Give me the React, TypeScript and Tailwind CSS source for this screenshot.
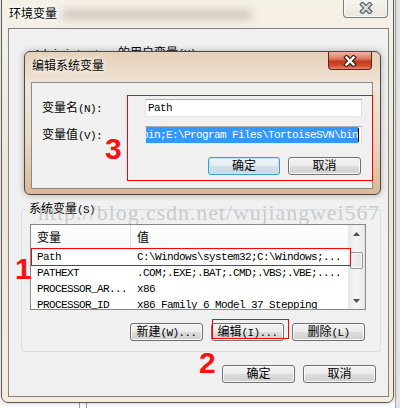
import clsx from "clsx";

const cjk = "font-['Noto_Sans_CJK_SC',sans-serif]";
const mono = "font-['Liberation_Mono','Noto_Sans_CJK_SC',monospace] text-[11px] tracking-[-0.6px]";

const rows = [
  ["Path", "C:\\Windows\\system32;C:\\Windows;..."],
  ["PATHEXT", ".COM;.EXE;.BAT;.CMD;.VBS;.VBE;...."],
  ["PROCESSOR_AR...", "x86"],
  ["PROCESSOR_ID", "x86 Family 6 Model 37 Stepping"],
];

function XGlyph({ fill, edge }: { fill: string; edge: string }) {
  return (
    <svg width="14" height="12" viewBox="0 0 14 12">
      <path d="M3.5 2.5L10.5 9.5M10.5 2.5L3.5 9.5" stroke={edge} strokeWidth="4.6" strokeLinecap="square" />
      <path d="M3.5 2.5L10.5 9.5M10.5 2.5L3.5 9.5" stroke={fill} strokeWidth="2.4" strokeLinecap="square" />
    </svg>
  );
}

function Label({ zh, en }: { zh: string; en: string }) {
  return (
    <span className="whitespace-nowrap text-[12px] leading-[16px] text-black">
      <span className={cjk}>{zh}</span>
      <span className={mono}>{en}</span>
    </span>
  );
}

function Btn({ zh, en = "", focus = false, narrow = false }: { zh: string; en?: string; focus?: boolean; narrow?: boolean }) {
  return (
    <button
      className={clsx(
        "h-[18px] rounded-[3px] border flex items-center justify-center",
        narrow ? "w-[72px]" : "w-[73px]",
        focus
          ? "border-[#3c9bd0] bg-[linear-gradient(#eef4f8_0%,#e4edf3_50%,#d3e0e9_50%,#c9d8e3_100%)] shadow-[inset_0_0_0_1px_#c4e8fb]"
          : "border-[#707070] bg-[linear-gradient(#f3f3f3_0%,#ebebeb_50%,#dddddd_50%,#d0d0d0_100%)] shadow-[inset_0_0_0_1px_#fbfbfb]"
      )}
    >
      <Label zh={zh} en={en} />
    </button>
  );
}

function Arrow({ up }: { up?: boolean }) {
  return (
    <svg width="7" height="4" viewBox="0 0 7 4">
      <polygon points={up ? "0,4 7,4 3.5,0" : "0,0 7,0 3.5,4"} fill="#4d4d4d" />
    </svg>
  );
}

export default function App() {
  return (
    <div className="relative w-[400px] h-[408px] overflow-hidden bg-white">
      {/* desktop behind */}
      <div className="absolute right-0 top-0 w-[5px] h-[408px] bg-[#e4e4e4] border-l border-[#a8a8a8]" />
      <div className="absolute left-[79px] top-[395px] w-[1px] h-[13px] bg-[#9a9a9a]" />
      <div className="absolute left-[86px] top-[395px] w-[1px] h-[13px] bg-[#9a9a9a]" />

      {/* 环境变量 window */}
      <div className="absolute left-[1px] top-[-10px] w-[393px] h-[413px] rounded-b-[7px] border border-[#5b5b5b] bg-[linear-gradient(180deg,#f6f1e8_0%,#eee5d7_45%,#f7ecdc_100%)] shadow-[0_0_4px_rgba(0,0,0,0.25)] flex flex-col">
        <div className="relative h-[37px] shrink-0 flex justify-between">
          <div className="absolute left-[60px] top-[19px] w-[190px] h-[9px] rounded-full bg-[#7d7468]/35 blur-[4px]" />
          <span className={`${cjk} relative pl-[7px] pt-[14px] text-[12px] leading-[16px] text-black [text-shadow:0_0_8px_#fff,0_0_4px_#fff]`}>
            环境变量
          </span>
          <div className="mr-[5px] w-[45px] h-[27px] rounded-b-[4px] border border-t-0 border-[#7e7e7e] bg-[linear-gradient(#fbfaf8,#ece7df)] shadow-[inset_0_0_0_1px_#ffffffaa] flex items-end justify-center pb-[3px]">
            <XGlyph fill="#d5d9df" edge="#55585d" />
          </div>
        </div>

        <div className="ml-[6px] mr-[4px] h-[369px] border border-[#838383] bg-[#f0f0f0] flex flex-col">
          <div className="pl-[25px] pt-[15px] h-[31px] text-[12px] leading-[16px] whitespace-nowrap">
            <span className={mono}>Administrator </span>
            <span className={cjk}>的用户变量</span>
            <span className={mono}>(U)</span>
          </div>

          <fieldset className="mt-[140px] ml-[12px] mr-[7px] w-[360px] border border-[#d5dfe5] rounded-[3px] px-[8px] pb-[10px]">
            <legend className="ml-[-2px] px-[1px] text-[12px] leading-[16px]">
              <Label zh="系统变量" en="(S)" />
            </legend>
            <div className="mt-[6px] w-[336px] h-[86px] border border-[#828790] bg-white flex">
              <div className="flex-1 overflow-hidden flex flex-col">
                <div className="h-[24px] shrink-0 flex border-b border-[#e5e5e5] bg-[linear-gradient(#ffffff,#f7f8f9)]">
                  <div className={`${cjk} w-[100px] pl-[6px] flex items-center border-r border-[#e2e2e2] text-[12px]`}>变量</div>
                  <div className={`${cjk} pl-[6px] flex items-center text-[12px]`}>值</div>
                </div>
                {rows.map(([name, value]) => (
                  <div key={name} className={`${mono} h-[16px] shrink-0 flex leading-[16px] text-black whitespace-nowrap`}>
                    <div className="w-[100px] pl-[6px]">{name}</div>
                    <div className="pl-[6px]">{value}</div>
                  </div>
                ))}
              </div>
              <div className="w-[17px] shrink-0 flex flex-col bg-[linear-gradient(90deg,#e6e6e6,#f4f4f4_40%,#f4f4f4_60%,#e6e6e6)]">
                <div className="h-[17px] flex items-center justify-center">
                  <Arrow up />
                </div>
                <div className="h-[50px] pt-[10px] px-[2px]">
                  <div className="h-[17px] rounded-[2px] border border-[#979797] bg-[linear-gradient(90deg,#f2f2f2,#e2e2e2)] shadow-[inset_0_0_0_1px_#fafafa]" />
                </div>
                <div className="h-[17px] flex items-center justify-center">
                  <Arrow />
                </div>
              </div>
            </div>
            <div className="mt-[13px] mr-[7px] flex justify-end gap-[8px]">
              <Btn zh="新建" en="(W)..." />
              <Btn zh="编辑" en="(I)..." />
              <Btn zh="删除" en="(L)" />
            </div>
          </fieldset>

          <div className="mt-[13px] mr-[12px] flex justify-end gap-[8px]">
            <Btn zh="确定" />
            <Btn zh="取消" />
          </div>
        </div>
      </div>

      {/* 编辑系统变量 dialog */}
      <div className="absolute left-[24px] top-[51px] w-[357px] h-[144px] rounded-[6px] border border-[#4a4a4a] bg-[linear-gradient(180deg,#e6cfb7_0%,#f1e7db_25%,#ead8c4_60%,#d9b999_100%)] shadow-[0_0_6px_rgba(0,0,0,0.3)] flex flex-col">
        <div className="h-[30px] shrink-0 flex justify-between">
          <span className={`${cjk} pl-[7px] pt-[5px] text-[12px] leading-[16px] text-black [text-shadow:0_0_8px_#fff,0_0_4px_#fff]`}>
            编辑系统变量
          </span>
          <div className="mr-[8px] w-[44px] h-[18px] rounded-b-[4px] border border-t-0 border-[#5a2418] bg-[linear-gradient(#eeb5a5_0%,#de7a61_40%,#c53a1e_55%,#cf4b2d_80%,#e48a6d_100%)] flex items-center justify-center">
            <XGlyph fill="#ffffff" edge="#3d1a12" />
          </div>
        </div>
        <div className="ml-[6px] mr-[7px] h-[107px] border border-[#8a8a8a] bg-[#f0f0f0] flex flex-col pl-[10px] pr-[10px] pt-[16px]">
          <div className="grid grid-cols-[103px_217px] gap-y-[9px] items-center">
            <Label zh="变量名" en="(N):" />
            <div className="h-[18px] border border-[#abadb3] border-l-[#e2e3ea] border-r-[#dbdfe6] border-b-[#e3e9ef] bg-white pl-[2px] flex items-center">
              <span className={`${mono} leading-[14px]`}>Path</span>
            </div>
            <Label zh="变量值" en="(V):" />
            <div className="h-[18px] border border-[#abadb3] border-l-[#e2e3ea] border-r-[#dbdfe6] border-b-[#e3e9ef] bg-white pr-[2px] flex items-center justify-end overflow-hidden">
              <span className={`${mono} shrink-0 whitespace-nowrap bg-[#3399ff] text-white leading-[16px]`}>
                %SystemRoot%\system32;C:\bin;E:\Program Files\TortoiseSVN\bin
              </span>
              <span className="shrink-0 w-[1px] h-[14px] bg-black" />
            </div>
          </div>
          <div className="mt-[13px] pr-[1px] flex justify-end gap-[8px]">
            <Btn zh="确定" focus narrow />
            <Btn zh="取消" />
          </div>
        </div>
      </div>

      {/* watermark */}
      <div className="absolute left-[38px] top-[202px] whitespace-nowrap font-['Liberation_Serif',serif] text-[22px] leading-none tracking-[0.9px] text-[#9a9a9a]/45">
        http://blog.csdn.net/wujiangwei567
      </div>

      {/* annotations */}
      <div className="absolute left-[127px] top-[95px] w-[246px] h-[86px] border border-[#ff0000]" />
      <div className="absolute left-[31px] top-[248px] w-[320px] h-[18px] border border-[#ff0000]" />
      <div className="absolute left-[212px] top-[319px] w-[77px] h-[20px] border border-[#ff0000]" />
      <div className="absolute left-[105px] top-[134px] font-['Liberation_Sans',sans-serif] font-bold text-[30px] leading-none text-[#ff1010]">3</div>
      <div className="absolute left-[15px] top-[254px] font-['Liberation_Sans',sans-serif] font-bold text-[30px] leading-none text-[#ff1010]">1</div>
      <div className="absolute left-[199px] top-[348px] font-['Liberation_Sans',sans-serif] font-bold text-[30px] leading-none text-[#ff1010]">2</div>
    </div>
  );
}
